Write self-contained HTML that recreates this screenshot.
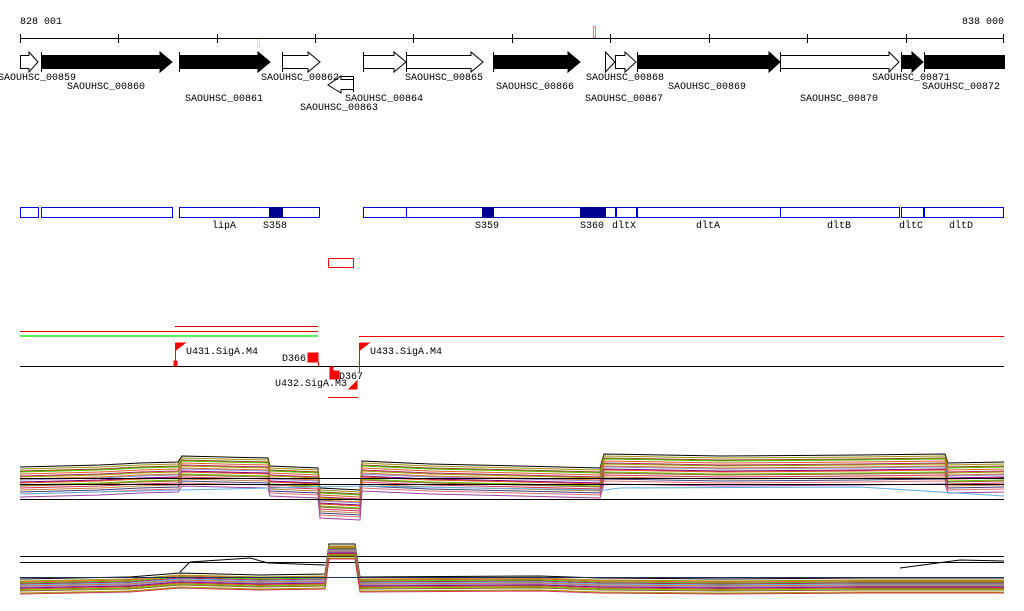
<!DOCTYPE html>
<html><head><meta charset="utf-8"><style>
html,body{margin:0;padding:0;background:#fff;width:1024px;height:611px;overflow:hidden}
svg text{font-family:"Liberation Mono",monospace;font-size:10px;fill:#000}
</style></head><body>
<svg width="1024" height="611" viewBox="0 0 1024 611" xmlns="http://www.w3.org/2000/svg">
<text x="20" y="24">828 001</text>
<text x="1004" y="24" text-anchor="end">838 000</text>
<line x1="20" y1="38.5" x2="1004" y2="38.5" stroke="#000"/>
<g stroke="#000">
<line x1="20.5" y1="34" x2="20.5" y2="43"/><line x1="118.5" y1="34" x2="118.5" y2="43"/><line x1="217.5" y1="34" x2="217.5" y2="43"/><line x1="315.5" y1="34" x2="315.5" y2="43"/><line x1="413.5" y1="34" x2="413.5" y2="43"/><line x1="512.5" y1="34" x2="512.5" y2="43"/><line x1="610.5" y1="34" x2="610.5" y2="43"/><line x1="709.5" y1="34" x2="709.5" y2="43"/><line x1="807.5" y1="34" x2="807.5" y2="43"/><line x1="906.5" y1="34" x2="906.5" y2="43"/><line x1="1003.5" y1="34" x2="1003.5" y2="43"/>
</g>
<rect x="593.5" y="26.5" width="2" height="11" fill="none" stroke="#f08070"/>
<rect x="257.5" y="39.5" width="2" height="8" fill="none" stroke="#f8d0c0"/>
<g stroke="#000" stroke-width="1">
<polygon points="20.5,55.5 29,55.5 29,52 38,62 29,72 29,68.5 20.5,68.5" fill="#fff"/>
<line x1="41.5" y1="52" x2="41.5" y2="72"/>
<polygon points="41.5,55.5 160,55.5 160,52 172,62 160,72 160,68.5 41.5,68.5" fill="#000"/>
<line x1="179.5" y1="52" x2="179.5" y2="72"/>
<polygon points="179.5,55.5 258,55.5 258,52 270,62 258,72 258,68.5 179.5,68.5" fill="#000"/>
<line x1="282.5" y1="52" x2="282.5" y2="72"/>
<polygon points="282.5,55.5 308,55.5 308,52 320,62 308,72 308,68.5 282.5,68.5" fill="#fff"/>
<polyline points="340,76.5 353.5,76.5 353.5,92" fill="none"/>
<polygon points="353.5,79.5 341,79.5 341,76 328,85 341,93 341,89.5 353.5,89.5" fill="#fff"/>
<line x1="363.5" y1="52" x2="363.5" y2="72"/>
<polygon points="363.5,55.5 394,55.5 394,52 406,62 394,72 394,68.5 363.5,68.5" fill="#fff"/>
<line x1="406.5" y1="52" x2="406.5" y2="72"/>
<polygon points="406.5,55.5 471,55.5 471,52 483,62 471,72 471,68.5 406.5,68.5" fill="#fff"/>
<line x1="493.5" y1="52" x2="493.5" y2="72"/>
<polygon points="493.5,55.5 568,55.5 568,52 580,62 568,72 568,68.5 493.5,68.5" fill="#000"/>
<polygon points="605.5,52 615,62 605.5,72" fill="#fff"/>
<polygon points="615.5,55.5 625,55.5 625,52 636,62 625,72 625,68.5 615.5,68.5" fill="#fff"/>
<line x1="637.5" y1="52" x2="637.5" y2="72"/>
<polygon points="637.5,55.5 769,55.5 769,52 780,62 769,72 769,68.5 637.5,68.5" fill="#000"/>
<line x1="780.5" y1="52" x2="780.5" y2="72"/>
<polygon points="780.5,55.5 889,55.5 889,52 899,62 889,72 889,68.5 780.5,68.5" fill="#fff"/>
<line x1="901.5" y1="52" x2="901.5" y2="72"/>
<polygon points="901.5,55.5 912,55.5 912,52 923,62 912,72 912,68.5 901.5,68.5" fill="#000"/>
<line x1="924.5" y1="52" x2="924.5" y2="72"/>
<rect x="924.5" y="55.5" width="80" height="13" fill="#000"/>
</g>
<text x="-2" y="80">SAOUHSC_00859</text>
<text x="67" y="89">SAOUHSC_00860</text>
<text x="185" y="101">SAOUHSC_00861</text>
<text x="261" y="80">SAOUHSC_00862</text>
<text x="300" y="110">SAOUHSC_00863</text>
<text x="345" y="101">SAOUHSC_00864</text>
<text x="405" y="80">SAOUHSC_00865</text>
<text x="496" y="89">SAOUHSC_00866</text>
<text x="585" y="101">SAOUHSC_00867</text>
<text x="586" y="80">SAOUHSC_00868</text>
<text x="668" y="89">SAOUHSC_00869</text>
<text x="800" y="101">SAOUHSC_00870</text>
<text x="872" y="80">SAOUHSC_00871</text>
<text x="922" y="89">SAOUHSC_00872</text>
<g fill="#fff" stroke="#0000e0">
<rect x="20.5" y="207.5" width="18" height="10"/>
<rect x="41.5" y="207.5" width="131" height="10"/>
<rect x="179.5" y="207.5" width="140" height="10"/>
<rect x="363.5" y="207.5" width="43" height="10"/>
<rect x="406.5" y="207.5" width="209" height="10"/>
<rect x="616.5" y="207.5" width="20" height="10"/>
<rect x="637.5" y="207.5" width="143" height="10"/>
<rect x="780.5" y="207.5" width="119" height="10"/>
<rect x="901.5" y="207.5" width="22" height="10"/>
<rect x="924.5" y="207.5" width="79" height="10"/>
</g>
<g fill="#000090">
<rect x="269" y="207" width="14" height="11"/>
<rect x="482" y="207" width="12" height="11"/>
<rect x="580" y="207" width="26" height="11"/>
</g>
<text x="212" y="228">lipA</text>
<text x="263" y="228">S358</text>
<text x="475" y="228">S359</text>
<text x="580" y="228">S360</text>
<text x="612" y="228">dltX</text>
<text x="696" y="228">dltA</text>
<text x="827" y="228">dltB</text>
<text x="899" y="228">dltC</text>
<text x="949" y="228">dltD</text>
<rect x="328.5" y="258.5" width="25" height="9" fill="#fff" stroke="#f00"/>
<line x1="175" y1="326.5" x2="318" y2="326.5" stroke="#e00000"/>
<line x1="20" y1="331.5" x2="318" y2="331.5" stroke="#e00000"/>
<line x1="20" y1="336" x2="318" y2="336" stroke="#00e000" stroke-width="1.3"/>
<line x1="359" y1="336.5" x2="1004" y2="336.5" stroke="#f00"/>
<line x1="20" y1="366.5" x2="1004" y2="366.5" stroke="#000"/>
<g fill="#f00" stroke="#f00">
<line x1="175.5" y1="343" x2="175.5" y2="366"/><polygon points="176,343 185,343 176,350"/><rect x="174" y="361" width="3" height="5"/>
<line x1="359.5" y1="343" x2="359.5" y2="372"/><polygon points="360,343 369,343 360,350"/>
<rect x="308" y="353" width="10" height="9"/><line x1="318.5" y1="362" x2="318.5" y2="366"/>
<rect x="330" y="367" width="3" height="4"/><rect x="330" y="371" width="9" height="8"/>
<polygon points="357,381 357,389 349,389"/>
<line x1="328" y1="397.5" x2="358" y2="397.5"/>
</g>
<text x="186" y="354">U431.SigA.M4</text>
<text x="370" y="354">U433.SigA.M4</text>
<text x="282" y="361">D366</text>
<text x="339" y="379">D367</text>
<text x="275" y="386">U432.SigA.M3</text>
<defs>
<path id="p1" d="M20,467 L100,465 L140,463 L178,462 L182,456 L268,458 L270,466 L318,468 L320,488 L360,490 L362,461 L430,464 L520,466 L600,468 L604,454 L720,456 L860,455 L945,454 L948,463 L1004,462" fill="none"/>
<path id="p2" d="M20,579 L130,577 L180,573 L260,575 L325,574 L329,544 L355,544 L360,577 L540,576 L600,578 L720,579 L860,578 L1004,578" fill="none"/>
</defs>
<g>
<use href="#p1" stroke="#000" y="0"/>
<use href="#p1" stroke="#a09010" y="2"/>
<use href="#p1" stroke="#8b4513" y="4"/>
<use href="#p1" stroke="#50c000" y="5"/>
<use href="#p1" stroke="#e06030" y="7"/>
<use href="#p1" stroke="#b02060" y="9"/>
<use href="#p1" stroke="#a0a000" y="10"/>
<use href="#p1" stroke="#d07030" y="12"/>
<use href="#p1" stroke="#9090d0" y="13"/>
<use href="#p1" stroke="#800080" y="15"/>
<use href="#p1" stroke="#e05020" y="16"/>
<use href="#p1" stroke="#70c000" y="18"/>
<use href="#p1" stroke="#906030" y="19"/>
<use href="#p1" stroke="#d03050" y="21"/>
<use href="#p1" stroke="#c08040" y="23"/>
<use href="#p1" stroke="#404080" y="25"/>
<use href="#p1" stroke="#e07070" y="27"/>
<use href="#p1" stroke="#a040a0" y="30"/>
</g>
<path d="M20,494 L180,490 L360,486 L604,490 L620,488 L860,487 L1004,496" fill="none" stroke="#60b0e0"/>
<line x1="20" y1="478.5" x2="1004" y2="478.5" stroke="#000"/>
<line x1="20" y1="484.5" x2="1004" y2="484.5" stroke="#000"/>
<line x1="20" y1="499.5" x2="1004" y2="499.5" stroke="#000"/>
<line x1="20" y1="556.5" x2="1004" y2="556.5" stroke="#000"/>
<line x1="20" y1="562.5" x2="1004" y2="562.5" stroke="#000"/>
<path d="M180,572 L190,562 L250,558 L268,563 L325,565" fill="none" stroke="#000"/>
<path d="M900,568 L960,560 L1004,561" fill="none" stroke="#000"/>
<g>
<use href="#p2" stroke="#000" y="0"/>
<use href="#p2" stroke="#a09010" y="2"/>
<use href="#p2" stroke="#e06030" y="3"/>
<use href="#p2" stroke="#50c000" y="4"/>
<use href="#p2" stroke="#b02060" y="5"/>
<use href="#p2" stroke="#60b0e0" y="6"/>
<use href="#p2" stroke="#d07030" y="7"/>
<use href="#p2" stroke="#9090d0" y="8"/>
<use href="#p2" stroke="#800080" y="9"/>
<use href="#p2" stroke="#e05020" y="10"/>
<use href="#p2" stroke="#70c000" y="11"/>
<use href="#p2" stroke="#906030" y="12"/>
<use href="#p2" stroke="#a0a000" y="14"/>
<use href="#p2" stroke="#d03050" y="15"/>
</g>
<line x1="20" y1="577.5" x2="1004" y2="577.5" stroke="#203060"/>
</svg>
</body></html>
